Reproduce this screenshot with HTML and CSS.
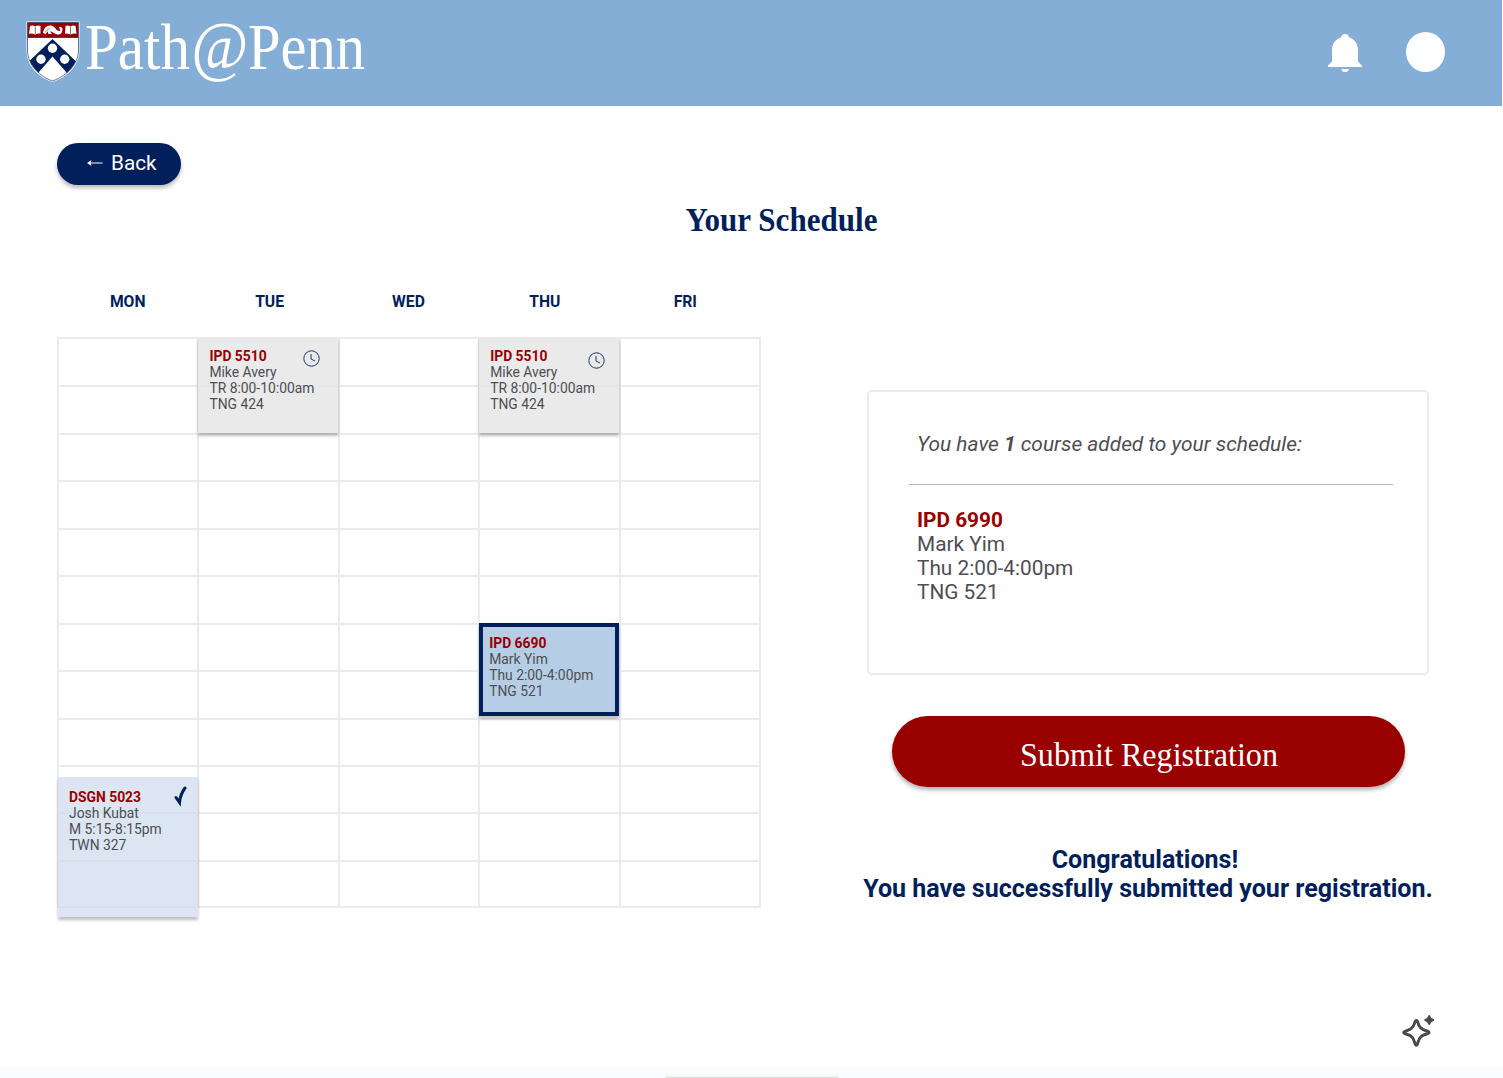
FILE: index.html
```html
<!DOCTYPE html>
<html lang="en">
<head>
<meta charset="utf-8">
<title>Path@Penn – Your Schedule</title>
<link rel="stylesheet" href="styles.css">
</head>
<body>
<div class="page">
  <header class="topbar">
    <svg class="logo" width="354" height="98" viewBox="20 4 354 98" role="img" aria-label="Path@Penn">
      <defs>
        <clipPath id="shield"><path d="M27.500 22.500H78.500V50C78.500 66 64 77 52.500 81C41 77 27.500 66 27.500 50Z"/></clipPath>
      </defs>
      <path d="M26.500 21.500H79.500V50C79.500 67 65 78 52.500 82C40 78 26.500 67 26.500 50Z" fill="#fff"/>
      <g clip-path="url(#shield)">
        <path d="M52.500 39L84 69L74 81L52.500 56.500L31 81L21 69Z" fill="#011f5b"/>
        <path d="M27 22H79V37.500H27Z" fill="#990000"/>
        <path d="M27 22.700H79M27 37.300H79" stroke="#333" stroke-width="1"/>
        <circle cx="52.500" cy="48.300" r="4.700" fill="#fff"/>
        <circle cx="41" cy="59.300" r="4.700" fill="#fff"/>
        <circle cx="64.700" cy="59.300" r="4.700" fill="#fff"/>
      </g>
      <path d="M27.500 22.500H78.500V50C78.500 66 64 77 52.500 81C41 77 27.500 66 27.500 50Z" fill="none" stroke="#3c5078" stroke-width=".8"/>
      <path d="M30 26Q33 25 35 26.500Q38 25 40.500 26V33.500Q38 33 35.300 34.500Q32 33 29 33.700ZM65.500 26Q68 25 70.500 26.500Q73 25 75.500 26L76.500 33.700Q73 33 70.500 34.500Q67.500 33 65 33.500Z" fill="#fff"/>
      <path d="M35.300 27V34M70.500 27V34" stroke="#444" stroke-width=".7"/>
      <path d="M43 33C43.500 28 47 25 51 25.500C55 26 56 31 59.500 31C61 31 60 28 58.500 27.500C60 26.500 62 27 62.500 29C62.500 33 60.500 34.800 57.500 34.500C54 34 53 31.500 50 31.500L52 34H48.500L47.500 31.500L45.500 34Z" fill="#fff"/>
      <path d="M47 29.500L50 28.500M45 31.500L48 30.500" stroke="#555" stroke-width=".6"/>
      <g class="wordmark">
        <text x="85" y="68.500" textLength="105" lengthAdjust="spacingAndGlyphs">Path</text>
        <text class="at" x="191" y="67.500" textLength="57" lengthAdjust="spacingAndGlyphs">@</text>
        <text x="248" y="68.500" textLength="117" lengthAdjust="spacingAndGlyphs">Penn</text>
      </g>
    </svg>
    <div class="tools">
      <svg width="34" height="41" viewBox="0 0 34 41" fill="#fff" aria-label="Notifications"><path d="M13.200 4.200A3.900 3.900 0 0 1 20.900 4.200C26.700 6 30 11 30 17V28.500L34 32.500V34H0V32.500L4 28.500V17C4 11 7.500 6 13.200 4.200ZM13.200 36H21A4 4 0 0 1 13.200 36Z"/></svg>
      <span class="avatar"></span>
    </div>
  </header>

  <main class="content">
    <button class="back"><svg width="16" height="8" viewBox="0 0 16 8"><path d="M2 4H15.500" stroke="#fff" stroke-width="1"/><path d="M0 4L4.500 1L3.500 4L4.500 7Z" fill="#fff"/></svg>Back</button>
    <h1 class="title"><svg width="200" height="44"><text x="0.500" y="32" textLength="192" lengthAdjust="spacingAndGlyphs">Your Schedule</text></svg></h1>

    <div class="columns">
      <section class="calendar">
        <div class="days"><span>MON</span><span class="tue">TUE</span><span>WED</span><span class="thu">THU</span><span class="fri">FRI</span></div>
        <div class="schedule">
          <div class="cells" id="cells"></div>
          <article class="event pending on-tue">
            <b>IPD 5510</b><span>Mike Avery</span><span>TR 8:00-10:00am</span><span>TNG 424</span>
            <svg class="mark clock" viewBox="0 0 17 17"><circle cx="8.500" cy="8.500" r="7.700"/><path d="M8 4V9L12 11"/></svg>
          </article>
          <article class="event pending on-thu">
            <b>IPD 5510</b><span>Mike Avery</span><span>TR 8:00-10:00am</span><span>TNG 424</span>
            <svg class="mark clock low" viewBox="0 0 17 17"><circle cx="8.500" cy="8.500" r="7.700"/><path d="M8 4V9L12 11"/></svg>
          </article>
          <article class="event selected">
            <b>IPD 6690</b><span>Mark Yim</span><span>Thu 2:00-4:00pm</span><span>TNG 521</span>
          </article>
          <article class="event enrolled">
            <b>DSGN 5023</b><span>Josh Kubat</span><span>M 5:15-8:15pm</span><span>TWN 327</span>
            <svg class="mark check" viewBox="0 0 13 19"><path d="M2 11.500L5.500 16.500C6 11 8 6 11 2" /></svg>
          </article>
        </div>
      </section>

      <section class="summary">
        <div class="panel">
          <p class="intro">You have <b>1</b> course added to your schedule:</p>
          <div class="course"><b>IPD 6990</b><span>Mark Yim</span><span>Thu 2:00-4:00pm</span><span>TNG 521</span></div>
        </div>
        <button class="submit"><svg width="270" height="50"><text x="6" y="34.500" textLength="258" lengthAdjust="spacingAndGlyphs">Submit Registration</text></svg></button>
        <p class="done"><span class="congrats">Congratulations!</span><span>You have successfully submitted your registration.</span></p>
      </section>
    </div>
  </main>

  <footer class="strip">
    <svg class="sparkle" width="34" height="34" viewBox="0 0 34 34"><path d="M15.300 5.500C16.300 5.500 16.700 6.500 17 8C18 12.500 20 14.300 25 15.700C29 16.800 29 18.200 25 19.300C20 20.700 18.400 22.500 17 27.300C16 31.200 14.600 31.200 13.600 27.300C12.200 22.500 10.500 20.700 5.700 19.300C1.700 18.200 1.700 16.800 5.700 15.700C10.500 14.300 12.500 12.500 13.600 8C14 6.500 14.300 5.500 15.300 5.500Z" fill="none" stroke="#4a4a4c" stroke-width="3"/><path d="M28.200 1C28.900 3.700 29.700 4.400 32.200 5C29.700 5.600 28.900 6.300 28.200 9C27.500 6.300 26.700 5.600 24.200 5C26.700 4.400 27.500 3.700 28.200 1Z" fill="#4a4a4c" stroke="#4a4a4c" stroke-width="2" stroke-linejoin="round"/></svg>
    <span class="tray"></span>
  </footer>
</div>
<script src="cells.js"></script>
</body>
</html>
```
FILE: cells.js
```js
// Twelve hourly rows for each of the five weekdays.
const cells = document.getElementById('cells');
for (let i = 0; i < 60; i++) cells.appendChild(document.createElement('i'));
```
FILE: styles.css
```css
* { box-sizing: border-box; }
body { margin: 0; background: #fff; font-family: Roboto, "Liberation Sans", sans-serif; color: #4e4e52; }
button { border: 0; font: inherit; color: #fff; }
h1, p { margin: 0; }
svg { display: block; flex: none; overflow: visible; }
.page { width: 1503px; height: 1078px; display: flex; flex-direction: column; overflow: hidden; }

.topbar { width: 1502px; height: 106px; background: #84aed5; display: flex; justify-content: space-between; padding: 4px 57px 0 20px; }
.wordmark { fill: #fff; font-family: "Liberation Serif", serif; font-size: 66px; }
.at { font-style: italic; font-size: 67px; }
.tools { display: flex; gap: 44px; padding-top: 28px; }
.tools svg { margin-top: 1px; }
.avatar { width: 39px; height: 40px; border-radius: 50%; background: #fff; }

.content { flex: 1; padding: 37px 57px 0; }
.back { width: 124px; height: 42px; border-radius: 21px; background: #011f5b; box-shadow: 0 3px 4px rgba(0,0,0,.28); display: flex; align-items: center; gap: 8px; padding: 0 0 2px 30px; font-size: 20.700px; }
.title { display: flex; padding: 14px 0 0 628px; height: 58px; }
.title text { font: bold 33px "Liberation Serif", serif; fill: #011f5b; }
.columns { display: flex; gap: 106px; padding-top: 49px; }

.calendar { width: 704px; }
.days { display: grid; grid-template-columns: repeat(5, 140.400px); height: 46px; padding-top: 1px; text-align: center; color: #011f5b; font-weight: 700; font-size: 15.700px; line-height: 18px; }
.days span { padding-left: 1px; }
.days .tue { padding-left: 4px; }
.days .thu, .days .fri { padding: 0 7px 0 0; }
.schedule { display: grid; grid-template: repeat(12, 47.450px) / repeat(5, 140.400px); }
.cells { grid-area: 1 / 1 / 13 / 6; display: grid; grid-template: subgrid / subgrid; margin: -1px -2px -1px 0; border: solid #ebebed; border-width: 0 2px 2px 0; }
.cells i { border: solid #ebebed; border-width: 2px 0 0 2px; }
.event { position: relative; display: flex; flex-direction: column; padding: 10px 0 0 11px; font-size: 13.870px; line-height: 16px; box-shadow: 0 3px 3px rgba(0,0,0,.25); }
.event b, .course b { color: #990000; font-weight: 700; }
.event b { font-size: 13.870px; }
.pending { background: rgba(229,229,230,.8); margin: 0 0 0 1px; }
.on-tue { grid-area: 1 / 2 / 3 / 3; }
.on-thu { grid-area: 1 / 4 / 3 / 5; }
.selected { grid-area: 7 / 4 / 9 / 5; margin: 0 0 2px 1px; background: #b5cee5; border: 4px solid #011f5b; padding: 8px 0 0 6px; }
.enrolled { grid-area: 10 / 1 / 13 / 2; background: rgba(206,221,237,.74); margin: 12px -1px -10px 1px; padding-top: 12px; }
.mark { position: absolute; fill: none; stroke: #1c356b; }
.clock { width: 17px; height: 17px; right: 18px; top: 12px; stroke-width: 1; }
.clock.low { right: 14px; top: 14px; }
.check { width: 13px; height: 19px; right: 11px; top: 9px; stroke: #011f5b; stroke-width: 3; stroke-linecap: round; }

.summary { width: 562px; padding-top: 98px; }
.panel { height: 285px; border: 2px solid #ebebed; border-radius: 5px; padding: 39px 34px 0 40px; font-size: 20.800px; line-height: 24px; }
.intro { font-style: italic; height: 54px; border-bottom: 1px solid #b3b3b5; padding: 1px 0 0 8px; font-size: 20.900px; white-space: nowrap; }
.course { display: flex; flex-direction: column; padding: 23px 0 0 8px; }
.course b { font-size: 20.800px; }
.submit { display: flex; justify-content: center; width: 513px; height: 71px; margin: 40.500px 0 0 25px; padding: 15px 0 0; border-radius: 36px; background: #990000; box-shadow: 0 3px 4px rgba(0,0,0,.3); }
.submit text { font: 34px "Liberation Serif", serif; fill: #fff; }
.done { display: flex; flex-direction: column; align-items: center; margin: 58.500px -10px 0; color: #011f5b; font-weight: 700; font-size: 25.050px; line-height: 29px; white-space: nowrap; }
.congrats { padding-right: 6px; }

.strip { position: relative; height: 11px; background: #fafbff; display: flex; justify-content: center; align-items: flex-end; }
.sparkle { position: absolute; left: 1401px; top: -52px; }
.tray { width: 172px; height: 1px; background: #deded8; box-shadow: 0 0 3px #ddd; }
```
